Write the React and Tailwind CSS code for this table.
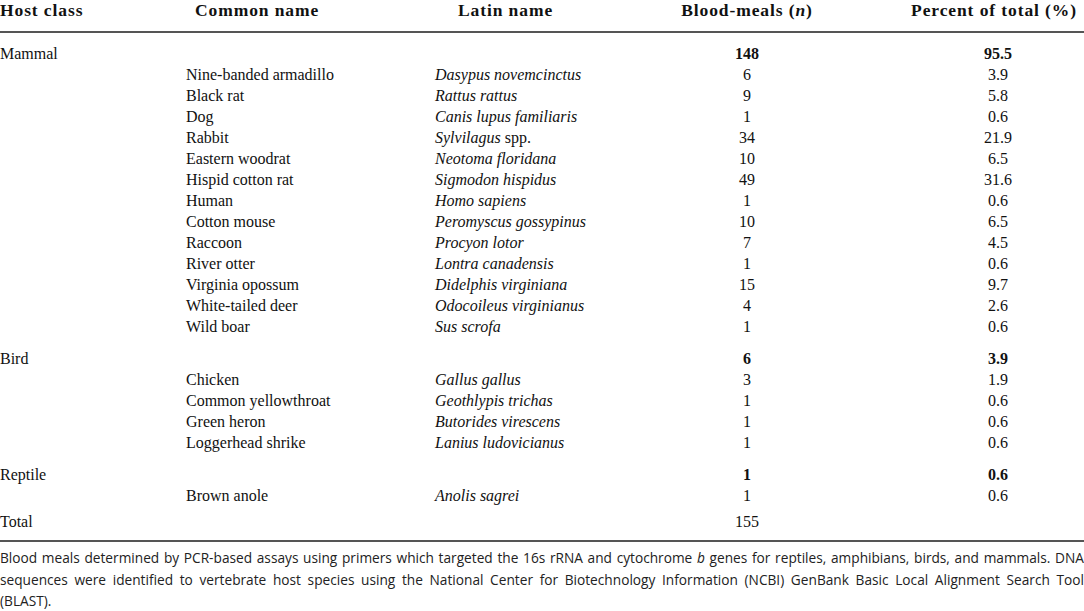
import React from "react";

const rows = [
  { g: "Mammal", n: "148", p: "95.5", first: true },
  { c: "Nine-banded armadillo", l: "Dasypus novemcinctus", n: "6", p: "3.9" },
  { c: "Black rat", l: "Rattus rattus", n: "9", p: "5.8" },
  { c: "Dog", l: "Canis lupus familiaris", n: "1", p: "0.6" },
  { c: "Rabbit", l: "Sylvilagus spp.", n: "34", p: "21.9", latinPlain: true },
  { c: "Eastern woodrat", l: "Neotoma floridana", n: "10", p: "6.5" },
  { c: "Hispid cotton rat", l: "Sigmodon hispidus", n: "49", p: "31.6" },
  { c: "Human", l: "Homo sapiens", n: "1", p: "0.6" },
  { c: "Cotton mouse", l: "Peromyscus gossypinus", n: "10", p: "6.5" },
  { c: "Raccoon", l: "Procyon lotor", n: "7", p: "4.5" },
  { c: "River otter", l: "Lontra canadensis", n: "1", p: "0.6" },
  { c: "Virginia opossum", l: "Didelphis virginiana", n: "15", p: "9.7" },
  { c: "White-tailed deer", l: "Odocoileus virginianus", n: "4", p: "2.6" },
  { c: "Wild boar", l: "Sus scrofa", n: "1", p: "0.6" },
  { g: "Bird", n: "6", p: "3.9" },
  { c: "Chicken", l: "Gallus gallus", n: "3", p: "1.9" },
  { c: "Common yellowthroat", l: "Geothlypis trichas", n: "1", p: "0.6" },
  { c: "Green heron", l: "Butorides virescens", n: "1", p: "0.6" },
  { c: "Loggerhead shrike", l: "Lanius ludovicianus", n: "1", p: "0.6" },
  { g: "Reptile", n: "1", p: "0.6" },
  { c: "Brown anole", l: "Anolis sagrei", n: "1", p: "0.6" },
  { g: "Total", n: "155", p: "", total: true },
];

const grid = "grid grid-cols-[186px_249px_185px_254px_1fr]";

export default function App() {
  return (
    <div className="w-[1084px] h-[611px] bg-white text-[#111] overflow-hidden">
      <div className="font-['Liberation_Serif',serif]">
        <div className={`${grid} h-[33px] border-b-2 border-[#555] text-[17.5px] leading-[20px] font-bold tracking-[0.9px]`}>
          <div>Host class</div>
          <div className="pl-[9px]">Common name</div>
          <div className="pl-[23px]">Latin name</div>
          <div className="text-center whitespace-nowrap">
            Blood-meals (<span className="italic">n</span>)
          </div>
          <div className="text-center pl-[30px] whitespace-nowrap">Percent of total (%)</div>
        </div>
        <div className="pt-[10px] pb-[8px] border-b-2 border-[#555] text-[16px] leading-[21px]">
          {rows.map((r, i) =>
            r.g ? (
              <div key={i} className={`${grid} ${r.first ? "" : r.total ? "pt-[5px]" : "pt-[11px]"}`}>
                <div>{r.g}</div>
                <div />
                <div />
                <div className={`text-center ${r.total ? "" : "font-bold"}`}>{r.n}</div>
                <div className="text-center pl-[38px] font-bold">{r.p}</div>
              </div>
            ) : (
              <div key={i} className={grid}>
                <div />
                <div>{r.c}</div>
                <div className={r.latinPlain ? "" : "italic"}>
                  {r.latinPlain ? (
                    <>
                      <span className="italic">Sylvilagus</span> spp.
                    </>
                  ) : (
                    r.l
                  )}
                </div>
                <div className="text-center">{r.n}</div>
                <div className="text-center pl-[38px]">{r.p}</div>
              </div>
            )
          )}
        </div>
      </div>
      <div className="pt-[5px] font-['Open_Sans',sans-serif] text-[13.7px] leading-[21.5px] text-[#222]">
        <p className="text-justify [text-align-last:justify] whitespace-nowrap">
          Blood meals determined by PCR-based assays using primers which targeted the 16s rRNA and cytochrome{" "}
          <span className="italic">b</span> genes for reptiles, amphibians, birds, and mammals. DNA
        </p>
        <p className="text-justify [text-align-last:justify] whitespace-nowrap">
          sequences were identified to vertebrate host species using the National Center for Biotechnology Information
          (NCBI) GenBank Basic Local Alignment Search Tool
        </p>
        <p>(BLAST).</p>
      </div>
    </div>
  );
}
